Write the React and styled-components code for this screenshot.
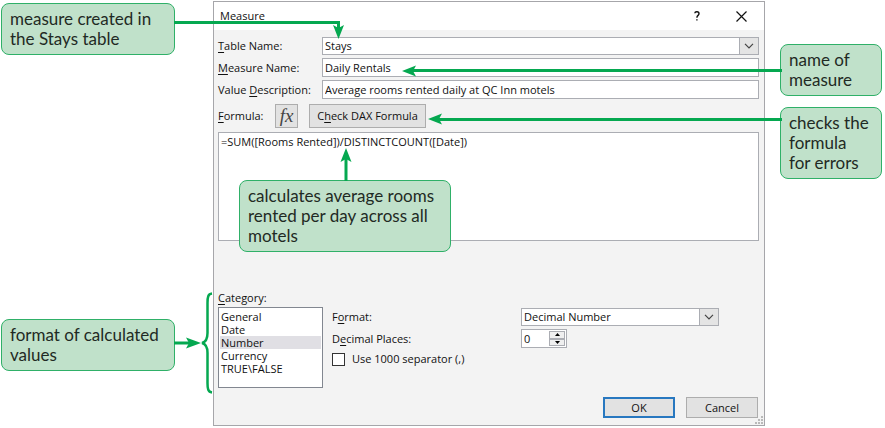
import React, { useState } from "react";
import styled, { createGlobalStyle } from "styled-components";

const GREEN = "#05a850";
const LINE = "#abadb3";

const GlobalStyle = createGlobalStyle`
  *, *::before, *::after { box-sizing: border-box; }
  body {
    margin: 0;
    background: #fff;
    color: #111;
    font: 11px/16px "Open Sans", "Noto Sans", sans-serif;
  }
  input, button, select, textarea { font: inherit; color: inherit; margin: 0; }
`;

const Figure = styled.main`
  display: grid;
  grid-template-columns: 211px minmax(0, 1fr) 117px;
  column-gap: 1px;
  padding: 3px 2px 0 1px;
`;

const Notes = styled.aside`
  display: flex;
  flex-direction: column;
  align-items: flex-start;
  justify-content: ${(p) => (p.$spread ? "space-between" : "flex-start")};
  gap: 11px;
  padding: ${(p) => p.$pad};
`;

const Callout = styled.div`
  position: relative;
  z-index: 2;
  width: ${(p) => p.$width};
  padding: 5px 8px;
  border: 1px solid #2fb068;
  border-radius: 8px;
  background: #c0e1ca;
  color: #1f2a24;
  font: 17px/20px Lato, sans-serif;
`;

const FloatingCallout = styled(Callout)`
  position: absolute;
  left: 21px;
  top: 48px;
`;

const Overlay = styled.svg`
  position: absolute;
  z-index: 3;
  left: ${(p) => p.$left};
  top: ${(p) => p.$top};
  overflow: visible;
  pointer-events: none;
`;

const Pointer = styled.div`
  position: absolute;
  z-index: 3;
  left: ${(p) => p.$left};
  right: -23px;
  top: 50%;
  height: 12px;
  margin-top: -3px;
  display: flex;
  align-items: center;
  pointer-events: none;

  &::after {
    content: "";
    flex: 1;
    height: 3px;
    margin-left: -4px;
    background: ${GREEN};
  }
`;

const Dialog = styled.form`
  margin-top: -2px;
  border: 1px solid #a6a6aa;
  background: #f3f3f3;
`;

const TitleBar = styled.header`
  display: flex;
  align-items: center;
  height: 28px;
  padding-left: 6px;
  background: #fff;
`;

const Title = styled.h1`
  flex: 1;
  margin: 0;
  font-size: 11px;
  font-weight: 400;
`;

const TitleButton = styled.button`
  display: grid;
  place-items: center;
  width: 45px;
  height: 26px;
  padding: 0;
  border: 0;
  background: none;
`;

const Body = styled.div`
  padding: 7px 5px 7px 4px;
`;

const Fields = styled.div`
  display: grid;
  gap: 3px;
`;

const Field = styled.div`
  position: relative;
  display: grid;
  grid-template-columns: 104px minmax(0, 1fr);
  align-items: center;
`;

const Label = styled.label`
  white-space: nowrap;
  u { text-underline-offset: 2px; }
`;

const TextInput = styled.input`
  width: 100%;
  height: 19px;
  padding: 0 2px;
  border: 1px solid ${LINE};
  background: #fff;
  outline: 0;
`;

const SelectBox = styled.div`
  position: relative;
`;

const Select = styled.select`
  appearance: none;
  display: block;
  width: 100%;
  height: 18px;
  padding: 0 20px 0 2px;
  border: 1px solid ${LINE};
  border-radius: 0;
  background: #fff;
  line-height: 16px;
  outline: 0;
`;

const Arrow = styled.span`
  position: absolute;
  right: 0;
  top: 0;
  display: grid;
  place-items: center;
  width: 20px;
  height: 18px;
  border: 1px solid ${LINE};
  background: #e4e4e4;
  pointer-events: none;
`;

const FormulaBar = styled.div`
  display: flex;
  align-items: center;
  gap: 11px;
  margin: 5px 0 4px;
`;

const FormulaLabel = styled(Label)`
  width: 46px;
`;

const Button = styled.button`
  position: relative;
  width: ${(p) => p.$width};
  height: ${(p) => p.$height};
  padding: 0;
  border: ${(p) => (p.$primary ? "2px solid #2878c0" : "1px solid #adadad")};
  background: #e2e2e2;
  white-space: nowrap;
  u { text-underline-offset: 2px; }
`;

const FxButton = styled(Button)`
  color: #444;
  font: italic 19px/20px "Liberation Serif", serif;
`;

const ButtonSlot = styled.div`
  position: relative;
  flex: 1;
  display: flex;
`;

const FormulaBox = styled.div`
  position: relative;
`;

const FormulaInput = styled.textarea`
  display: block;
  width: 100%;
  height: 109px;
  padding: 1px 2px;
  border: 1px solid ${LINE};
  background: #fff;
  resize: none;
  outline: 0;
`;

const FormatArea = styled.section`
  display: grid;
  grid-template-columns: 105px minmax(0, 1fr);
  column-gap: 9px;
  margin-top: 49px;
`;

const CategoryLabel = styled(Label)`
  grid-column: 1 / -1;
  height: 17px;
`;

const ListBox = styled.select`
  appearance: none;
  width: 100%;
  height: 81px;
  padding: 2px 1px;
  border: 1px solid #828790;
  border-radius: 0;
  background: #fff;
  overflow: hidden;
  outline: 0;

  option {
    display: flex;
    align-items: center;
    height: 13px;
    min-height: 13px;
    padding: 0 1px;
    line-height: 13px;
    color: #111;
  }
  option:checked {
    background: #e0dfe4 linear-gradient(#e0dfe4, #e0dfe4);
    color: #111;
  }
`;

const Options = styled.div`
  display: flex;
  flex-direction: column;
  gap: 3px;
  padding-top: 1px;
`;

const OptionRow = styled.div`
  display: grid;
  grid-template-columns: 189px minmax(0, 198px);
  align-items: center;
`;

const Spinner = styled.div`
  display: flex;
  width: 46px;
  height: 19px;
  padding: 1px;
  border: 1px solid ${LINE};
  background: #fff;
`;

const SpinInput = styled.input`
  flex: 1;
  min-width: 0;
  padding: 0 1px;
  border: 0;
  background: none;
  outline: 0;
`;

const SpinButtons = styled.div`
  display: grid;
  grid-template-rows: 1fr 1fr;
  width: 16px;
`;

const SpinButton = styled.button`
  display: grid;
  place-items: center;
  min-height: 0;
  padding: 0;
  border: 1px solid ${LINE};
  background: #efefef;
`;

const CheckLabel = styled.label`
  display: flex;
  align-items: center;
  gap: 7px;
`;

const Checkbox = styled.input`
  appearance: none;
  width: 13px;
  height: 13px;
  border: 1px solid #333;
  background: #fff;
  &:checked { background: #333; }
`;

const Footer = styled.footer`
  position: relative;
  display: flex;
  justify-content: flex-end;
  gap: 11px;
  padding: 9px 1px 0 0;
`;

const Grip = styled.svg`
  position: absolute;
  right: -4px;
  bottom: -6px;
`;

function Chevron() {
  return (
    <Arrow>
      <svg width="10" height="6" viewBox="0 0 10 6" aria-hidden="true">
        <path d="M1 .8 5 4.8 9 .8" fill="none" stroke="#444" strokeWidth="1.2" />
      </svg>
    </Arrow>
  );
}

function LeftPointer({ left }) {
  return (
    <Pointer $left={left}>
      <svg width="14" height="12" viewBox="0 0 14 12" aria-hidden="true">
        <path d="M0 6 14 .5 11 6 14 11.5Z" fill={GREEN} />
      </svg>
    </Pointer>
  );
}

export default function App() {
  const [places, setPlaces] = useState(0);
  const [formula, setFormula] = useState("=SUM([Rooms Rented])/DISTINCTCOUNT([Date])");

  return (
    <>
      <GlobalStyle />
      <Figure>
        <Notes $spread $pad="0 0 55px">
          <Callout $width="174px">
            measure created in the Stays table
            <Overlay $left="100%" $top="17px" width="170" height="18" aria-hidden="true">
              <path d="M0 1.5H164.500V8" fill="none" stroke={GREEN} strokeWidth="3" />
              <path d="M164.500 18 159 4 164.500 7 170 4Z" fill={GREEN} />
            </Overlay>
          </Callout>
          <Callout $width="174px">
            format of calculated values
            <Overlay $left="100%" $top="-28px" width="38" height="102" aria-hidden="true">
              <path d="M0 51H16" stroke={GREEN} strokeWidth="3" />
              <path d="M27 51 12 45.500 15 51 12 56.500Z" fill={GREEN} />
              <path
                d="M38 1.500C34 2 33.500 5 33.500 11V41C33.500 47 32 50 28 51C32 52 33.500 55 33.500 61V91C33.500 97 34 100 38 100.500"
                fill="none"
                stroke={GREEN}
                strokeWidth="2.500"
              />
            </Overlay>
          </Callout>
        </Notes>

        <Dialog onSubmit={(e) => e.preventDefault()}>
          <TitleBar>
            <Title>Measure</Title>
            <TitleButton type="button" aria-label="Help">
              <svg width="6" height="10" viewBox="0 0 6 10" aria-hidden="true">
                <path d="M.8 2.200C1 .2 5 .2 5 2.700C5 4.500 2.900 4.300 2.900 6.700M2.900 8.200V9.600" fill="none" stroke="#111" strokeWidth="1.400" />
              </svg>
            </TitleButton>
            <TitleButton type="button" aria-label="Close">
              <svg width="11" height="11" viewBox="0 0 11 11" aria-hidden="true">
                <path d="M.5.5 10.500 10.500M10.500.5.5 10.500" stroke="#111" strokeWidth="1.200" />
              </svg>
            </TitleButton>
          </TitleBar>

          <Body>
            <Fields>
              <Field>
                <Label htmlFor="table"><u>T</u>able Name:</Label>
                <SelectBox>
                  <Select id="table" defaultValue="Stays">
                    <option>Stays</option>
                  </Select>
                  <Chevron />
                </SelectBox>
              </Field>
              <Field>
                <Label htmlFor="name"><u>M</u>easure Name:</Label>
                <TextInput id="name" defaultValue="Daily Rentals" />
                <LeftPointer left="184px" />
              </Field>
              <Field>
                <Label htmlFor="description">Value <u>D</u>escription:</Label>
                <TextInput id="description" defaultValue="Average rooms rented daily at QC Inn motels" />
              </Field>
            </Fields>

            <FormulaBar>
              <FormulaLabel htmlFor="formula"><u>F</u>ormula:</FormulaLabel>
              <FxButton type="button" $width="23px" $height="24px" aria-label="Insert function"><i>fx</i></FxButton>
              <ButtonSlot>
                <Button type="button" $width="117px" $height="24px">C<u>h</u>eck DAX Formula</Button>
                <LeftPointer left="119px" />
              </ButtonSlot>
            </FormulaBar>

            <FormulaBox>
              <FormulaInput id="formula" value={formula} spellCheck={false} onChange={(e) => setFormula(e.target.value)} />
              <FloatingCallout $width="212px">
                calculates average rooms rented per day across all motels
                <Overlay $left="100px" $top="-33px" width="12" height="33" aria-hidden="true">
                  <path d="M6 9V33" stroke={GREEN} strokeWidth="3" />
                  <path d="M6 0 .5 14 6 11 11.500 14Z" fill={GREEN} />
                </Overlay>
              </FloatingCallout>
            </FormulaBox>

            <FormatArea>
              <CategoryLabel htmlFor="category"><u>C</u>ategory:</CategoryLabel>
              <ListBox id="category" size={6} defaultValue="Number">
                <option>General</option>
                <option>Date</option>
                <option>Number</option>
                <option>Currency</option>
                <option>TRUE\FALSE</option>
              </ListBox>
              <Options>
                <OptionRow>
                  <Label htmlFor="format">F<u>o</u>rmat:</Label>
                  <SelectBox>
                    <Select id="format" defaultValue="Decimal Number">
                      <option>Decimal Number</option>
                    </Select>
                    <Chevron />
                  </SelectBox>
                </OptionRow>
                <OptionRow>
                  <Label htmlFor="places">D<u>e</u>cimal Places:</Label>
                  <Spinner>
                    <SpinInput id="places" inputMode="numeric" value={places} onChange={(e) => setPlaces(Number(e.target.value) || 0)} />
                    <SpinButtons>
                      <SpinButton type="button" aria-label="Increase" onClick={() => setPlaces(places + 1)}>
                        <svg width="5" height="3" viewBox="0 0 5 3"><path d="M0 3 2.500 0 5 3Z" /></svg>
                      </SpinButton>
                      <SpinButton type="button" aria-label="Decrease" onClick={() => setPlaces(Math.max(0, places - 1))}>
                        <svg width="5" height="3" viewBox="0 0 5 3"><path d="M0 0 2.500 3 5 0Z" /></svg>
                      </SpinButton>
                    </SpinButtons>
                  </Spinner>
                </OptionRow>
                <CheckLabel>
                  <Checkbox type="checkbox" />
                  Use 1000 separator (,)
                </CheckLabel>
              </Options>
            </FormatArea>

            <Footer>
              <Button type="submit" $primary $width="72px" $height="21px">OK</Button>
              <Button type="button" $width="72px" $height="21px">Cancel</Button>
              <Grip width="8" height="8" viewBox="0 0 8 8" aria-hidden="true">
                <path d="M6 0h2v2H6zM3 3h2v2H3zM6 3h2v2H6zM0 6h2v2H0zM3 6h2v2H3zM6 6h2v2H6z" fill="#b9b9b9" />
              </Grip>
            </Footer>
          </Body>
        </Dialog>

        <Notes $pad="41px 0 0 14px">
          <Callout $width="102px">name of measure</Callout>
          <Callout $width="102px">checks the formula<br />for errors</Callout>
        </Notes>
      </Figure>
    </>
  );
}
